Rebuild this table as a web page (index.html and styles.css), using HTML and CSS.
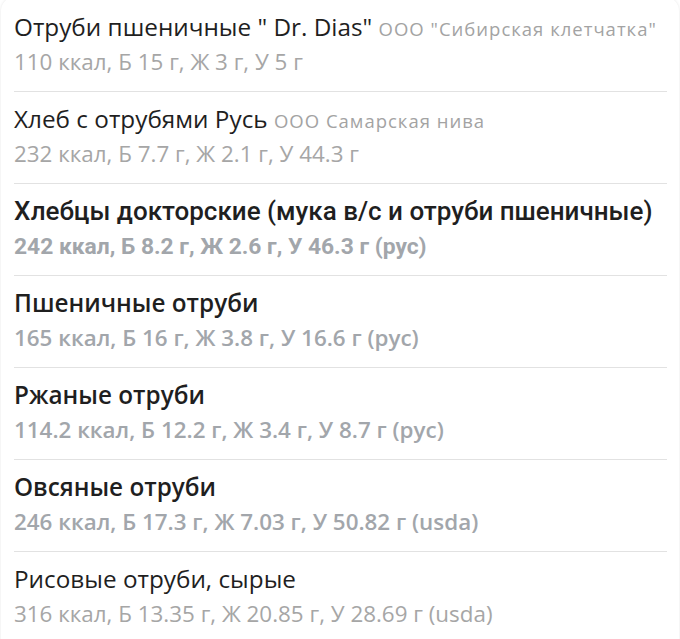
FILE: index.html
```html
<!DOCTYPE html>
<html lang="ru">
<head>
<meta charset="utf-8">
<link rel="stylesheet" href="styles.css">
</head>
<body>
<div class="card">
  <ul class="list">
    <li class="item">
      <div class="title">Отруби пшеничные " Dr. Dias" <span class="maker">ООО "Сибирская клетчатка"</span></div>
      <div class="sub">110 ккал, Б 15 г, Ж 3 г, У 5 г</div>
    </li>
    <li class="item">
      <div class="title">Хлеб с отрубями Русь <span class="maker">ООО Самарская нива</span></div>
      <div class="sub">232 ккал, Б 7.7 г, Ж 2.1 г, У 44.3 г</div>
    </li>
    <li class="item item-cond">
      <div class="title"><span class="cond">Хлебцы докторские (мука в/с и отруби пшеничные)</span></div>
      <div class="sub"><span class="cond">242 ккал, Б 8.2 г, Ж 2.6 г, У 46.3 г (рус)</span></div>
    </li>
    <li class="item item-bold">
      <div class="title">Пшеничные отруби</div>
      <div class="sub">165 ккал, Б 16 г, Ж 3.8 г, У 16.6 г (рус)</div>
    </li>
    <li class="item item-bold">
      <div class="title">Ржаные отруби</div>
      <div class="sub">114.2 ккал, Б 12.2 г, Ж 3.4 г, У 8.7 г (рус)</div>
    </li>
    <li class="item item-bold">
      <div class="title">Овсяные отруби</div>
      <div class="sub">246 ккал, Б 17.3 г, Ж 7.03 г, У 50.82 г (usda)</div>
    </li>
    <li class="item">
      <div class="title">Рисовые отруби, сырые</div>
      <div class="sub">316 ккал, Б 13.35 г, Ж 20.85 г, У 28.69 г (usda)</div>
    </li>
  </ul>
</div>
</body>
</html>
```

FILE: styles.css
```css
html, body {
  margin: 0;
  padding: 0;
  background: #ffffff;
}
body {
  font-family: "Open Sans", "Noto Sans", sans-serif;
  overflow: hidden;
  height: 639px;
}
.card {
  margin: -3px 1px 0;
  border-radius: 14px;
  box-shadow: 0 0 3px rgba(0, 0, 0, 0.10);
  background: #fff;
  padding: 3px 12px 0 13px;
  min-height: 700px;
}
.list {
  list-style: none;
  margin: 0;
  padding: 0;
}
.item {
  padding: 9px 0 12px;
  border-bottom: 1px solid #e2e2e2;
}
.title {
  font-size: 24.3px;
  line-height: 35px;
  height: 35px;
  color: #1f1f1f;
  white-space: nowrap;
}
.maker {
  font-size: 18.5px;
  line-height: 20px;
  letter-spacing: 1px;
  color: #a3a3a3;
}
.sub {
  font-size: 22.4px;
  line-height: 35px;
  height: 35px;
  color: #a6a6a6;
  white-space: nowrap;
}
.item-bold .title {
  font-weight: 600;
}
.item-bold .sub {
  font-weight: 600;
  color: #a2a6ab;
}
.item-cond .title .cond {
  font-family: Roboto, "Open Sans", sans-serif;
  font-size: 26px;
  font-weight: 500;
  font-stretch: 93%;
}
.item-cond .sub .cond {
  font-family: Roboto, "Open Sans", sans-serif;
  font-size: 22.8px;
  font-weight: 700;
  font-stretch: 93%;
  color: #a2a6ab;
}
```
